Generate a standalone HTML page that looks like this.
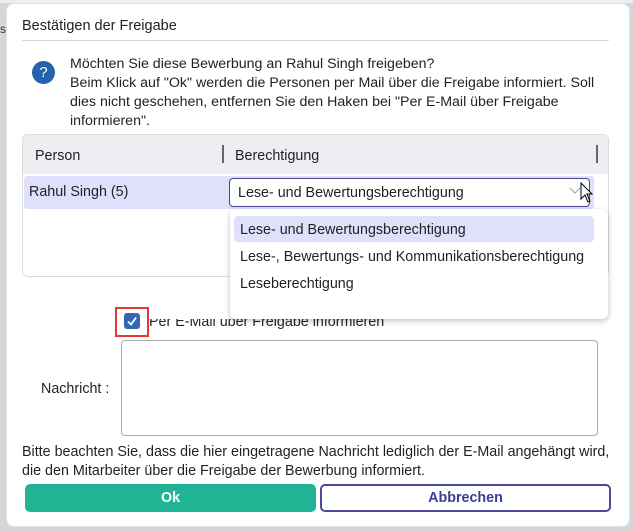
<!DOCTYPE html>
<html><head><meta charset="utf-8"><style>
*{box-sizing:border-box;margin:0;padding:0}
body{width:633px;height:531px;background:#d4d6d9;font-family:"Liberation Sans",sans-serif;font-size:14.3px;color:#222;position:relative;overflow:hidden}
.a{position:absolute;white-space:nowrap}
#dlg{position:absolute;left:6px;top:3px;width:624px;height:524px;background:#fff;border-radius:8px;border:1px solid #e2e2e2}
</style></head><body>
<div class="a" style="left:0;top:0;width:633px;height:3px;background:#eceef0"></div>
<div class="a" style="left:0;top:22px;font-size:12px;color:#333">s</div>
<div id="dlg"></div>
<div class="a" style="left:22px;top:18px;font-size:14.5px">Bestätigen der Freigabe</div>
<div class="a" style="left:22px;top:40px;width:587px;height:1px;background:#d8d8d8"></div>
<div class="a" style="left:32px;top:61px;width:23px;height:23px;border-radius:50%;background:#2462ad;color:#fff;font-size:15px;text-align:center;line-height:23px">?</div>
<div class="a" style="left:70px;top:55px;line-height:19px;font-size:14.2px">Möchten Sie diese Bewerbung an Rahul Singh freigeben?<br>Beim Klick auf "Ok" werden die Personen per Mail über die Freigabe informiert. Soll<br>dies nicht geschehen, entfernen Sie den Haken bei "Per E-Mail über Freigabe<br>informieren".</div>
<div class="a" style="left:22px;top:134px;width:587px;height:143px;border:1px solid #dcdcdc;border-radius:6px;overflow:hidden">
 <div style="height:39px;background:#edeef1"></div>
</div>
<div class="a" style="left:35px;top:148px">Person</div>
<div class="a" style="left:222px;top:145px;width:2px;height:18px;background:#666"></div>
<div class="a" style="left:235px;top:148px">Berechtigung</div>
<div class="a" style="left:596px;top:145px;width:2px;height:18px;background:#666"></div>
<div class="a" style="left:24px;top:176px;width:570px;height:33px;background:#dfe0fc;border-radius:3px"></div>
<div class="a" style="left:29px;top:184px">Rahul Singh (5)</div>
<div class="a" style="left:229px;top:178px;width:361px;height:29px;border:1px solid #45458f;border-radius:4px;background:#fff"></div>
<div class="a" style="left:238px;top:185px">Lese- und Bewertungsberechtigung</div>
<svg class="a" style="left:569px;top:186px" width="12" height="10"><path d="M1 2l5 5 5-5" stroke="#aaa" fill="none" stroke-width="1.2"/></svg>
<svg class="a" style="left:580px;top:182px" width="14" height="22"><path d="M1 1v16l4-4 3 7 2-1-3-7h5z" fill="#fff" stroke="#000" stroke-width="1"/></svg>
<div class="a" style="left:230px;top:209px;width:378px;height:110px;background:#fff;border-radius:6px;box-shadow:0 2px 6px rgba(0,0,0,.25)"></div>
<div class="a" style="left:234px;top:216px;width:360px;height:26px;background:#e0e0fc;border-radius:4px"></div>
<div class="a" style="left:240px;top:222px">Lese- und Bewertungsberechtigung</div>
<div class="a" style="left:240px;top:249px">Lese-, Bewertungs- und Kommunikationsberechtigung</div>
<div class="a" style="left:240px;top:276px">Leseberechtigung</div>
<div class="a" style="left:149px;top:319px;height:12px;overflow:hidden"><div style="margin-top:-5px">Per E-Mail über Freigabe informieren</div></div>
<div class="a" style="left:115px;top:307px;width:34px;height:30px;border:2px solid #e53935"></div>
<div class="a" style="left:124px;top:313px;width:16px;height:16px;background:#3568b0;border-radius:3px"></div>
<svg class="a" style="left:124px;top:313px" width="16" height="16"><path d="M4 8.5l3 3 5-7" stroke="#fff" fill="none" stroke-width="1.8"/></svg>
<div class="a" style="left:121px;top:340px;width:477px;height:96px;border:1px solid #aaa;border-radius:4px"></div>
<div class="a" style="left:41px;top:381px">Nachricht :</div>
<div class="a" style="left:22px;top:443px;line-height:19px">Bitte beachten Sie, dass die hier eingetragene Nachricht lediglich der E-Mail angehängt wird,<br>die den Mitarbeiter über die Freigabe der Bewerbung informiert.</div>
<div class="a" style="left:25px;top:484px;width:291px;height:28px;background:#20b394;border-radius:5px;color:#fff;font-weight:bold;text-align:center;line-height:28px">Ok</div>
<div class="a" style="left:320px;top:484px;width:291px;height:28px;border:2px solid #4a4a9a;border-radius:5px;color:#3b3b98;font-weight:bold;text-align:center;line-height:24px">Abbrechen</div>
</body></html>
